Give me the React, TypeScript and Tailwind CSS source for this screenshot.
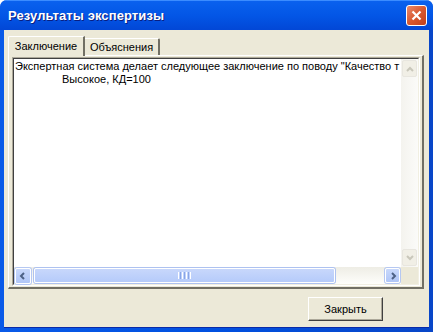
const Arrow = ({ dir, color }: { dir: "up" | "down" | "left" | "right"; color: string }) => {
  const pts = {
    up: "2,7 5,4 8,7",
    down: "2,3 5,6 8,3",
    left: "6,2 3,5 6,8",
    right: "4,2 7,5 4,8",
  }[dir];
  return (
    <svg width="10" height="10" viewBox="0 0 10 10">
      <polyline points={pts} fill="none" stroke={color} strokeWidth="2" />
    </svg>
  );
};

export default function App() {
  return (
    <div className="w-[433px] h-[332px] flex flex-col bg-gradient-to-r from-[#0a5ae8] via-[#0050e0] to-[#0846c8] rounded-t-[7px] overflow-hidden" style={{ fontFamily: '"Liberation Sans", Arial, sans-serif' }}>
      {/* title bar */}
      <div className="h-[30px] shrink-0 flex items-center justify-between pl-[8px] pr-[6px] bg-gradient-to-b from-[#0a61ee] via-[#0356e6] to-[#0247d6] border-t border-[#3b8cff]">
        <span className="text-white font-bold text-[13px] tracking-[0.1px] [text-shadow:1px_1px_0_#0a1e80]">Результаты экспертизы</span>
        <button className="w-[21px] h-[21px] rounded-[3px] border border-white bg-gradient-to-br from-[#e9896b] via-[#d8582f] to-[#c2401b] flex items-center justify-center">
          <svg width="11" height="11" viewBox="0 0 11 11">
            <path d="M1.5 1.5 L9.5 9.5 M9.5 1.5 L1.5 9.5" stroke="white" strokeWidth="2.2" />
          </svg>
        </button>
      </div>

      {/* client */}
      <div className="flex-1 mx-[4px] mb-[4px] bg-[#ece9d8] flex flex-col pt-[6px] pl-[4px] pr-[4px] text-[11px] text-black border-b border-[#0a2aa8]">
        {/* tabs */}
        <div className="flex items-end h-[19px]">
          <div className="h-[20px] w-[77px] border-l border-t border-white border-r-2 border-r-[#716f64] bg-[#ece9d8] flex items-center justify-center relative z-10 -mb-[1px] rounded-tl-[2px]">
            Заключение
          </div>
          <div className="h-[17px] w-[75px] border-t border-white border-r-2 border-r-[#716f64] flex items-center justify-center rounded-tr-[2px]">
            Объяснения
          </div>
        </div>

        {/* panel */}
        <div className="w-[416px] h-[234px] border-l border-t border-white border-r-2 border-b-2 border-r-[#716f64] border-b-[#716f64] pl-[3px] pt-[1px]">
          <div className="w-[408px] h-[229px] border-t border-l border-[#aca899] border-r border-b border-r-white border-b-white">
            <div className="w-full h-full border-t border-l border-[#404040] border-r border-b border-r-[#f1efe2] border-b-[#f1efe2] flex flex-col">
              <div className="flex flex-1 min-h-0">
                <div className="flex-1 bg-white pl-[1px] pt-[1px] leading-[13px] whitespace-pre overflow-hidden">
                  <div>Экспертная система делает следующее заключение по поводу "Качество т</div>
                  <div className="pl-[47px]">Высокое, КД=100</div>
                </div>
                {/* vertical scrollbar (disabled) */}
                <div className="w-[17px] flex flex-col bg-gradient-to-r from-[#f4f3ee] to-[#fbfbf9]">
                  <div className="h-[17px] m-[1px] rounded-[2px] border border-[#e8e6df] bg-[#f1efe6] flex items-center justify-center">
                    <Arrow dir="up" color="#c9c7ba" />
                  </div>
                  <div className="flex-1" />
                  <div className="h-[17px] m-[1px] rounded-[2px] border border-[#e8e6df] bg-[#f1efe6] flex items-center justify-center">
                    <Arrow dir="down" color="#c9c7ba" />
                  </div>
                </div>
              </div>
              {/* horizontal scrollbar */}
              <div className="h-[17px] flex">
                <div className="flex-1 flex items-center bg-gradient-to-b from-[#eeede5] to-[#fefefb]">
                  <div className="w-[16px] h-[16px] mx-[1px] rounded-[2px] border border-white bg-gradient-to-b from-[#c8d8fb] to-[#b0c6f7] flex items-center justify-center shadow-[0_0_0_1px_#b6c8f2]">
                    <Arrow dir="left" color="#4d6185" />
                  </div>
                  <div className="w-[301px] h-[15px] ml-[2px] rounded-[2px] border border-[#ffffff] bg-gradient-to-b from-[#c8d7fb] to-[#b5cbfa] shadow-[0_0_0_1px_#aec2f0] flex items-center justify-center">
                    <div className="flex gap-[1px]">
                      <div className="w-[1px] h-[7px] bg-white" />
                      <div className="w-[1px] h-[7px] bg-[#8aa6e6]" />
                      <div className="w-[1px] h-[7px] bg-white" />
                      <div className="w-[1px] h-[7px] bg-[#8aa6e6]" />
                      <div className="w-[1px] h-[7px] bg-white" />
                      <div className="w-[1px] h-[7px] bg-[#8aa6e6]" />
                      <div className="w-[1px] h-[7px] bg-white" />
                    </div>
                  </div>
                  <div className="flex-1" />
                  <div className="w-[15px] h-[15px] mr-[1px] rounded-[2px] border border-white bg-gradient-to-b from-[#c8d8fb] to-[#b0c6f7] flex items-center justify-center shadow-[0_0_0_1px_#b6c8f2]">
                    <Arrow dir="right" color="#4d6185" />
                  </div>
                </div>
                <div className="w-[17px] bg-[#ece9d8]" />
              </div>
            </div>
          </div>
        </div>

        {/* footer */}
        <div className="flex-1 flex items-start justify-end pt-[8px] pr-[42px]">
          <button className="w-[75px] h-[24px] border border-t-white border-l-white border-r-[#404040] border-b-[#404040] bg-[#ece9d8] shadow-[inset_-1px_-1px_0_#aca899] text-[11px]">
            Закрыть
          </button>
        </div>
      </div>
    </div>
  );
}
